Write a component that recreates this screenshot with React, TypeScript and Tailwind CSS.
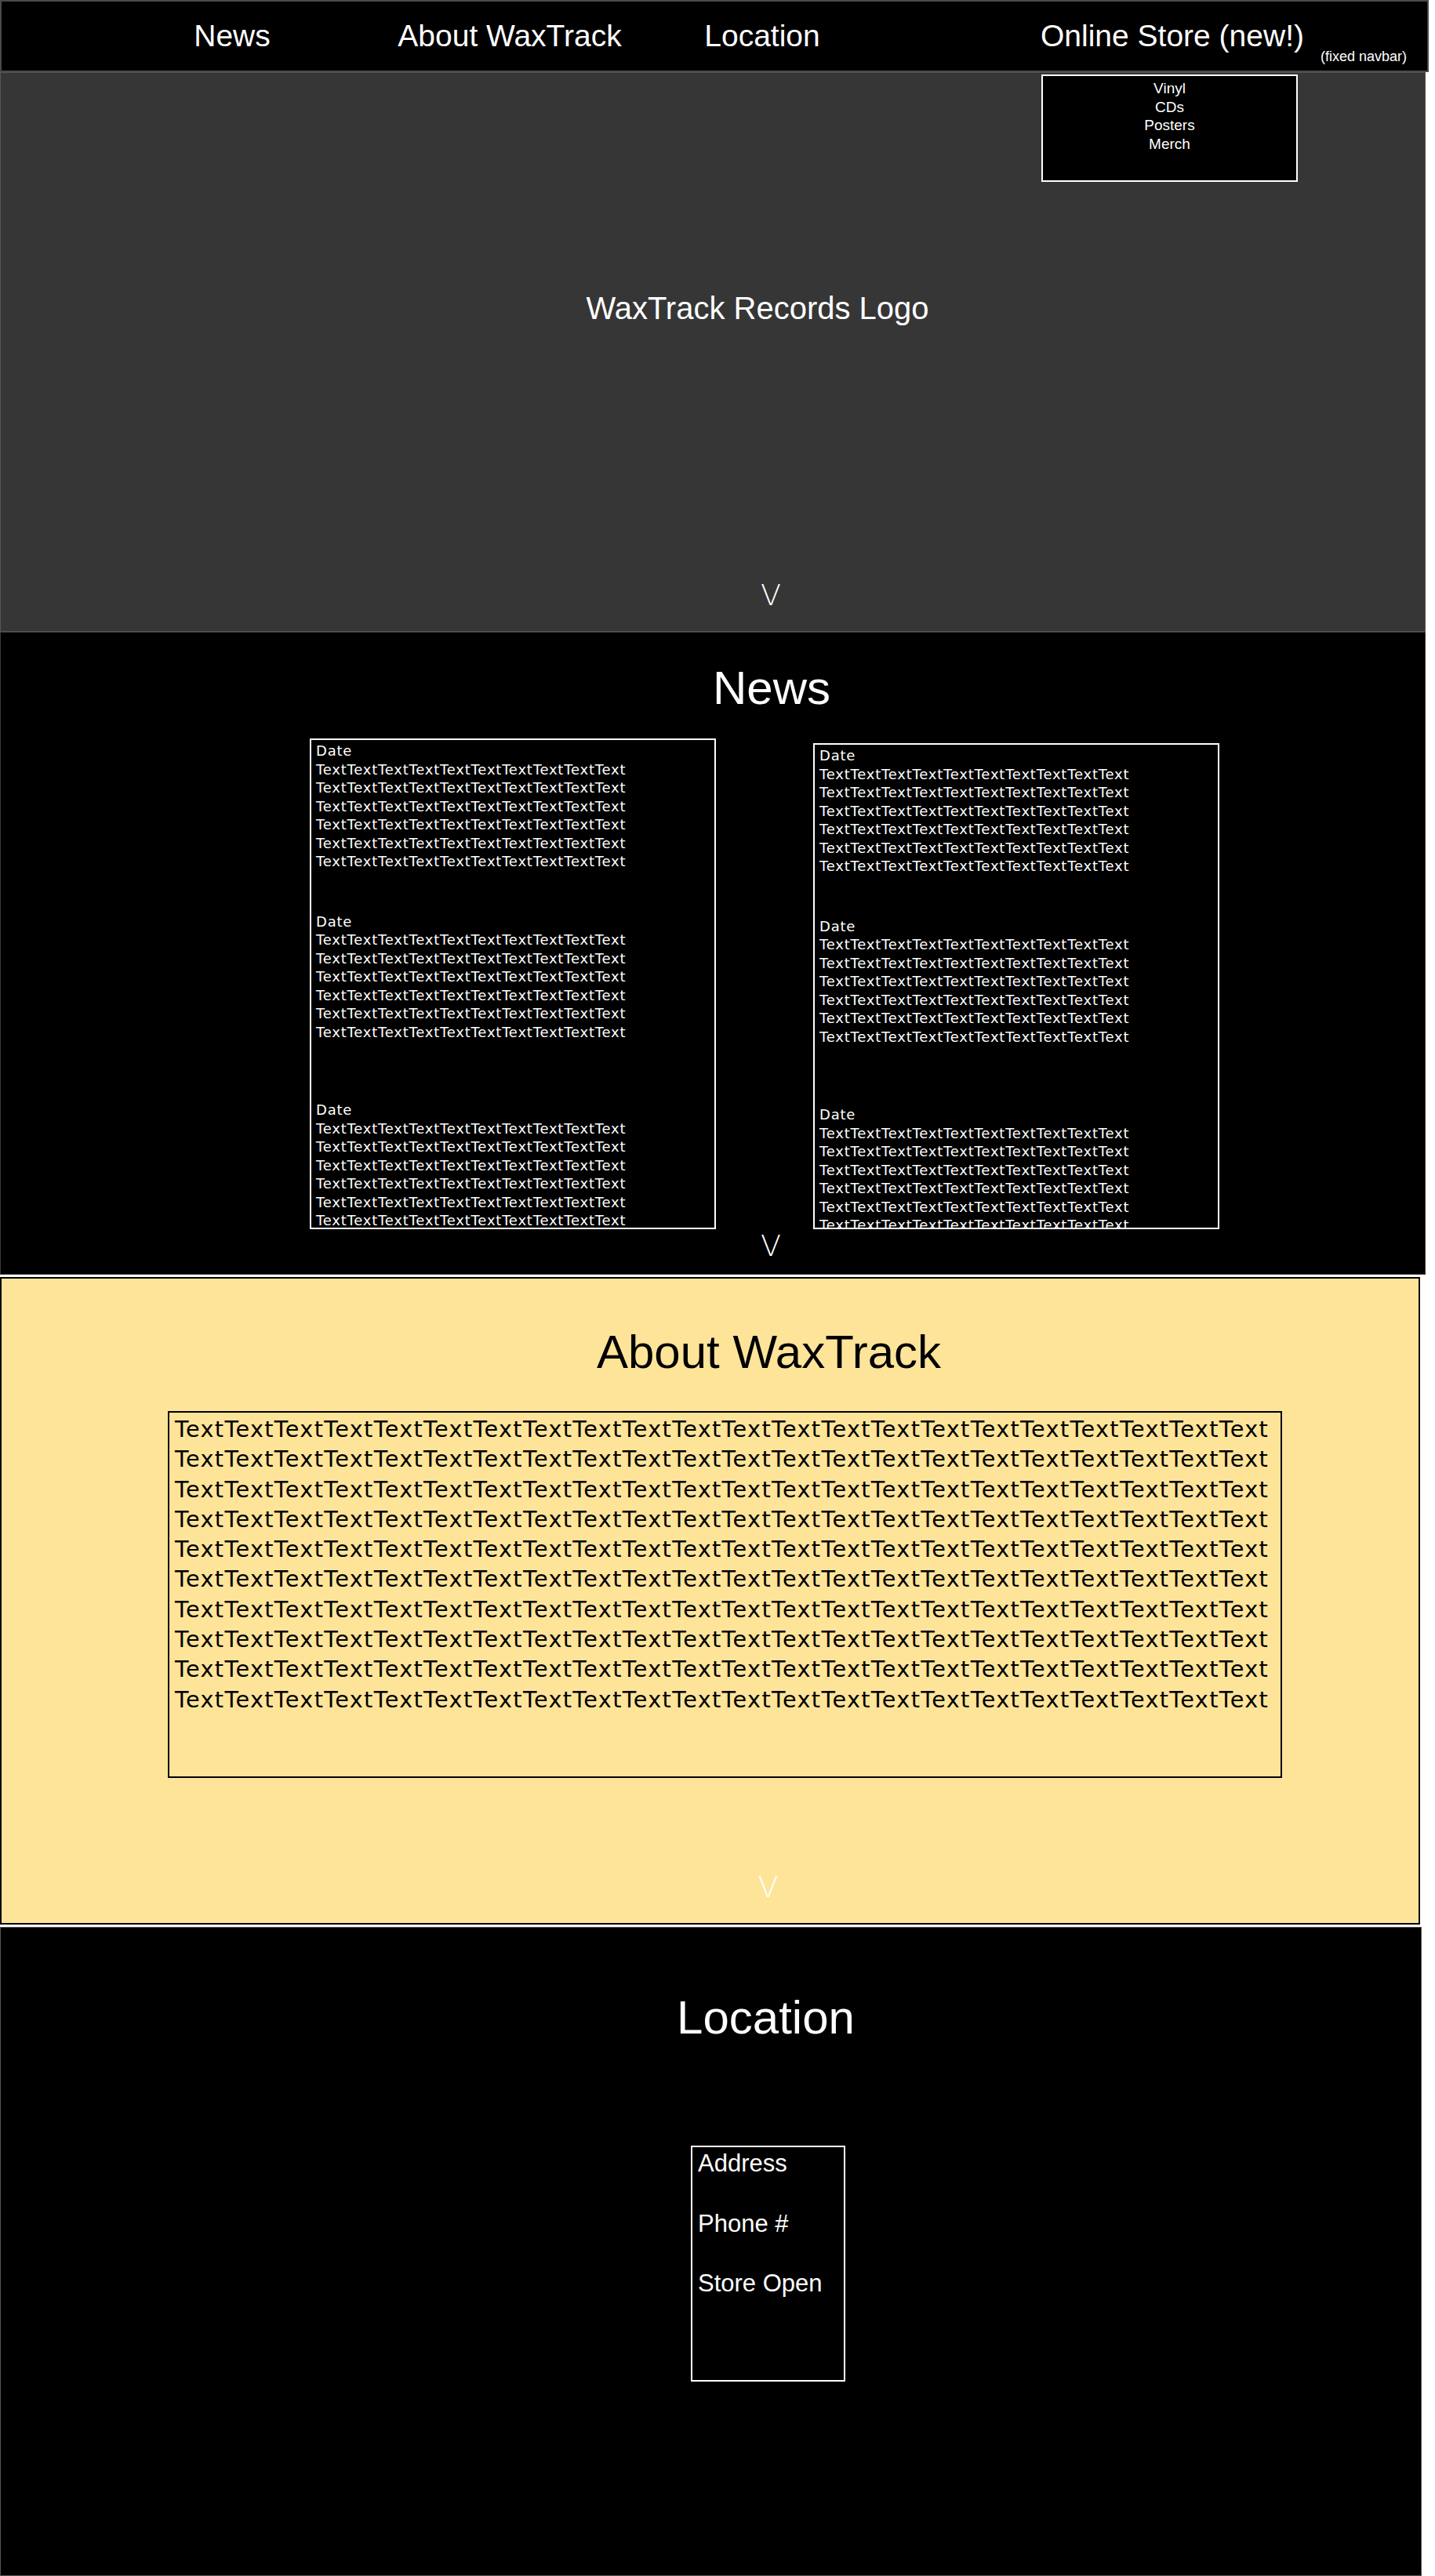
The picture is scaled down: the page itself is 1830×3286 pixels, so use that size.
const newsEntries = [0, 1, 2];
const entryGaps = ["mt-0", "mt-[53px]", "mt-[76px]"];
const storeItems = ["Vinyl", "CDs", "Posters", "Merch"];

const line = "Text".repeat(10);
const aboutLine = "Text".repeat(22);

function Chevron({ className = "" }: { className?: string }) {
  return (
    <div
      className={`w-full pl-[148px] text-center font-['DejaVu_Sans',sans-serif] text-[38px] leading-[38px] font-extralight text-white ${className}`}
    >
      V
    </div>
  );
}

function NewsCard({ className = "" }: { className?: string }) {
  return (
    <div
      className={`w-[518px] overflow-hidden border-2 border-white bg-black pl-[6px] pt-[2px] font-['DejaVu_Sans',sans-serif] text-[18px] leading-[23.5px] tracking-[0.78px] text-white ${className}`}
    >
      {newsEntries.map((i) => (
        <div key={i} className={entryGaps[i]}>
          <p>Date</p>
          {[0, 1, 2, 3, 4, 5].map((n) => (
            <p key={n} className="whitespace-nowrap">
              {line}
            </p>
          ))}
        </div>
      ))}
    </div>
  );
}

export default function App() {
  return (
    <div className="min-h-[3286px] w-[1830px] bg-white font-['Liberation_Sans',Arial,sans-serif]">
      {/* navbar */}
      <nav className="relative z-10 flex h-[92px] w-[1822px] items-center border-2 border-[#4a4a4a] bg-black text-[39px] text-white">
        <a className="ml-[194px] w-[200px] text-center">News</a>
        <a className="ml-[74px] w-[360px] text-center">About WaxTrack</a>
        <a className="ml-[42px] w-[200px] text-center">Location</a>
        <div className="relative ml-[238px] flex w-[370px] items-center justify-center self-stretch">
          <a>Online Store (new!)</a>
          <div className="absolute left-[18px] top-[93px] h-[137px] w-[327px] border-2 border-white bg-black pt-[4px] text-center text-[19px] leading-[23.7px]">
            {storeItems.map((item) => (
              <p key={item}>{item}</p>
            ))}
          </div>
        </div>
        <span className="mb-[4px] ml-[4px] self-end text-[18px]">(fixed navbar)</span>
      </nav>

      {/* hero */}
      <section className="flex h-[714px] w-[1818px] flex-col border border-[#555] bg-[#363636] pt-[276px]">
        <h1 className="w-full pl-[114px] text-center text-[40px] leading-[48px] text-white">
          WaxTrack Records Logo
        </h1>
        <Chevron className="mt-[323px]" />
      </section>

      {/* news */}
      <section className="flex h-[820px] w-[1818px] flex-col border border-[#3a3a3a] bg-black pt-[36px]">
        <h2 className="w-full pl-[150px] text-center text-[60px] leading-[70px] text-white">News</h2>
        <div className="mt-[29px] flex items-start">
          <NewsCard className="ml-[394px] h-[626px]" />
          <NewsCard className="ml-[124px] mt-[6px] h-[620px]" />
        </div>
        <Chevron className="mt-[2px]" />
      </section>

      {/* about */}
      <section className="mt-[3px] flex h-[826px] w-[1811px] flex-col border-2 border-black bg-[#fee499] pt-[59px]">
        <h2 className="w-full pl-[150px] text-center text-[60px] leading-[70px] text-black">
          About WaxTrack
        </h2>
        <div className="ml-[212px] mt-[40px] h-[468px] w-[1421px] overflow-hidden border-2 border-black pl-[7px] pt-[2px] font-['DejaVu_Sans',sans-serif] text-[28.7px] leading-[38.3px] tracking-[1.35px] text-black">
          {[0, 1, 2, 3, 4, 5, 6, 7, 8, 9].map((n) => (
            <p key={n} className="whitespace-nowrap">
              {aboutLine}
            </p>
          ))}
        </div>
        <Chevron className="mt-[120px]" />
      </section>

      {/* location */}
      <section className="mt-[3px] flex h-[828px] w-[1813px] flex-col border border-[#555] bg-black pt-[80px]">
        <h2 className="w-full pl-[140px] text-center text-[60px] leading-[70px] text-white">Location</h2>
        <div className="ml-[880px] mt-[128px] flex h-[301px] w-[197px] flex-col gap-[40.7px] border-2 border-white pl-[7px] pt-[3px] text-[31px] leading-[36px] text-white">
          <p>Address</p>
          <p>Phone #</p>
          <p>Store Open</p>
        </div>
      </section>
    </div>
  );
}
